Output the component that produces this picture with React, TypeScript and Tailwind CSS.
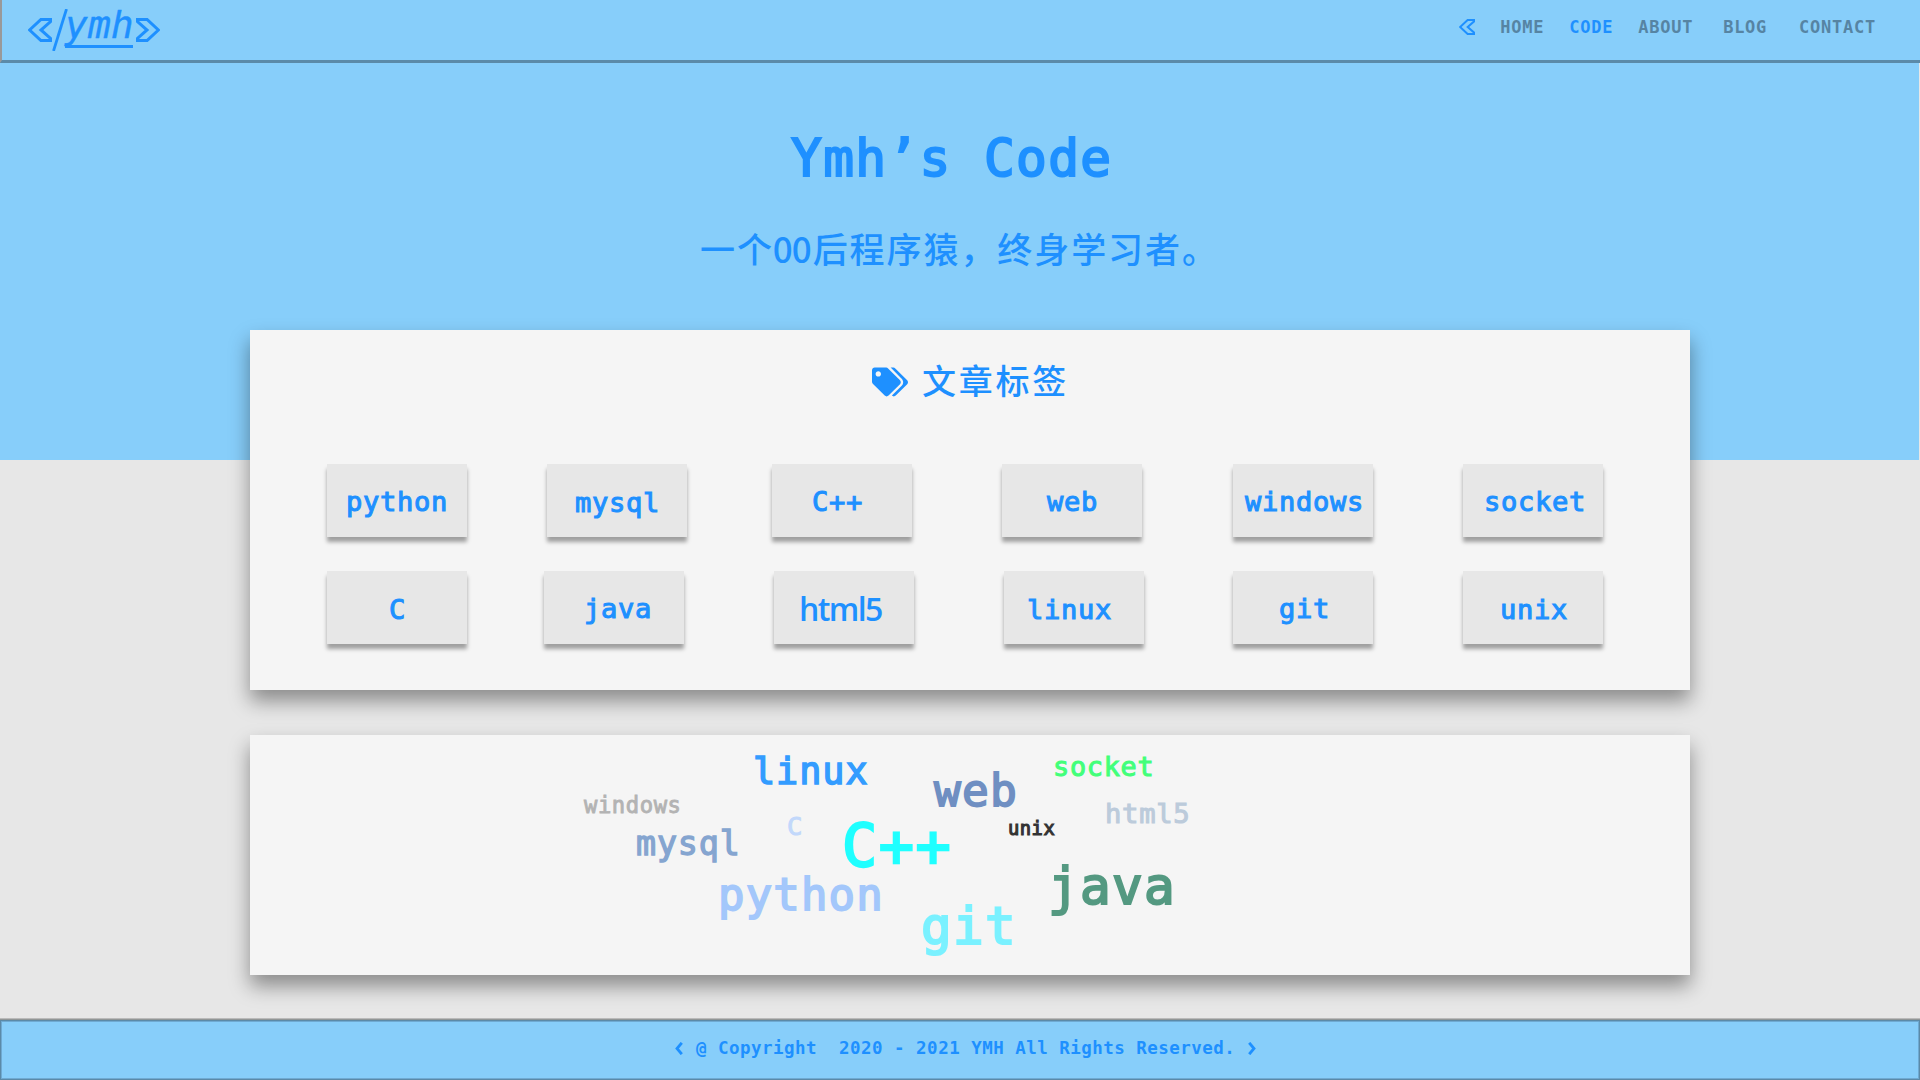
import { FaTags } from "react-icons/fa";

const MONO = "font-['DejaVu_Sans_Mono','Liberation_Mono',monospace]";
const CJK = "font-['Noto_Sans_CJK_SC',sans-serif]";
const SEMI = "tracking-[0.026em] [-webkit-text-stroke:0.04em_currentColor]";

function Chevrons({ className, weight }: { className: string; weight: number }) {
  return (
    <svg viewBox="0 0 24 24" className={className} fill="none" stroke="currentColor" strokeWidth={weight}>
      <path d="M22.8 1.4H13L1.6 12L13 22.6H22.8V20.6L13 12L22.8 3.4Z" />
    </svg>
  );
}

function Arrow({ className }: { className: string }) {
  return (
    <svg viewBox="0 0 8 13" className={className} fill="none" stroke="currentColor" strokeWidth="2.8">
      <path d="M6.8 0.8L2 6.5L6.8 12.2" />
    </svg>
  );
}

const nav = [
  { label: "HOME", cls: "ml-[25px] text-[#5684a3]" },
  { label: "CODE", cls: "ml-[25px] text-[#1e90ff]" },
  { label: "ABOUT", cls: "ml-[25px] text-[#5684a3]" },
  { label: "BLOG", cls: "ml-[30px] text-[#5684a3]" },
  { label: "CONTACT", cls: "ml-[32px] text-[#5684a3]" },
];

const rowOne = [
  { label: "python", cls: "ml-[77px] pl-[19px] pt-[24px]" },
  { label: "mysql", cls: "ml-[80px] pl-[28px] pt-[25px]" },
  { label: "C++", cls: "ml-[85px] pl-[40px] pt-[24px]" },
  { label: "web", cls: "ml-[90px] pl-[45px] pt-[24px]" },
  { label: "windows", cls: "ml-[91px] pl-[12px] pt-[24px]" },
  { label: "socket", cls: "ml-[90px] pl-[21px] pt-[24px]" },
];

const rowTwo = [
  { label: "C", cls: "ml-[77px] pl-[62px] pt-[25px]" },
  { label: "java", cls: "ml-[77px] pl-[40px] pt-[24px]" },
  { label: "html5", cls: "ml-[90px] pl-[25px] pt-[22px]" },
  { label: "linux", cls: "ml-[90px] pl-[23px] pt-[25px]" },
  { label: "git", cls: "ml-[89px] pl-[46px] pt-[24px]" },
  { label: "unix", cls: "ml-[90px] pl-[37px] pt-[25px]" },
];

const cloud = [
  { label: "linux", cls: "left-[503px] top-[19px] text-[36.8px] text-[#339cff]" },
  { label: "windows", cls: "left-[334px] top-[59px] text-[22.2px] text-[#b3b3b3]" },
  { label: "mysql", cls: "left-[386px] top-[92px] text-[33.3px] text-[#85a5d0]" },
  { label: "C", cls: "left-[537px] top-[79px] text-[25.5px] text-[#c2d8fb]" },
  { label: "C++", cls: "left-[592px] top-[82px] text-[58.5px] text-[#1fffff]" },
  { label: "python", cls: "left-[468px] top-[138px] text-[44px] text-[#a3c7fb]" },
  { label: "web", cls: "left-[684px] top-[34px] text-[44.5px] text-[#6f8fc2]" },
  { label: "socket", cls: "left-[803px] top-[19px] text-[26.9px] text-[#42ff7a]" },
  { label: "html5", cls: "left-[855px] top-[65px] text-[27.2px] text-[#bccbdb]" },
  { label: "unix", cls: "left-[758px] top-[85px] text-[18.8px] [-webkit-text-stroke:0.06em_currentColor] text-[#333333]" },
  { label: "java", cls: "left-[798px] top-[126px] text-[51px] text-[#549981]" },
  { label: "git", cls: "left-[671px] top-[166px] text-[51px] text-[#7af1ff]" },
];

function TagRow({ tags }: { tags: { label: string; cls: string }[] }) {
  return (
    <div className="flex">
      {tags.map((t) => (
        <div
          key={t.label}
          className={`h-[73px] w-[140px] shrink-0 whitespace-nowrap bg-[#e7e7e7] leading-none text-[#1e90ff] shadow-[0_5px_4px_rgba(0,0,0,0.35)] ${t.cls}`}
        >
          {t.label === "html5" ? (
            <span className="block font-['Open_Sans',sans-serif] text-[32px] font-semibold leading-none tracking-[-0.05em]">
              {t.label}
            </span>
          ) : (
            <span className={`block text-[27.1px] ${MONO} ${SEMI}`}>{t.label}</span>
          )}
        </div>
      ))}
    </div>
  );
}

export default function App() {
  return (
    <div className={`flex h-[1080px] w-[1920px] flex-col overflow-hidden bg-[#e7e7e7] ${MONO}`}>
      <header className="flex h-[63px] shrink-0 items-start border-b-[3px] border-l-2 border-b-[#5b8aa8] border-l-[#999999] bg-[#87cefa] text-[#1e90ff]">
        <div className="flex pl-[26px]">
          <Chevrons weight={3} className="mt-[18px] h-6 w-6" />
          <svg viewBox="0 0 16 42" className="mt-[9px] h-[42px] w-4" stroke="currentColor" strokeWidth="2.8">
            <path d="M1.5 42L14.5 0" />
          </svg>
          <span className="-ml-[3px] mt-[6px] h-[42px] w-[68px] border-b-[3px] border-current text-[38px] italic leading-none [-webkit-text-stroke:0.4px_currentColor]">
            ymh
          </span>
          <Chevrons weight={3} className="ml-[3px] mt-[18px] h-6 w-6 -scale-x-100" />
        </div>
        <nav className="ml-auto flex items-start pr-[44px]">
          <Chevrons weight={3} className="mt-[19px] h-4 w-4" />
          {nav.map((n) => (
            <a key={n.label} className={`mt-[19px] text-[17px] font-bold leading-none tracking-[0.75px] ${n.cls}`}>
              {n.label}
            </a>
          ))}
        </nav>
      </header>

      <section className="mr-px h-[397px] shrink-0 bg-[#87cefa] text-[#1e90ff]">
        <h1 className={`pl-[791px] pt-[70px] text-[51.2px] leading-none ${SEMI}`}>Ymh’s Code</h1>
        <p className={`pl-[700px] pt-[46px] text-[35px] font-medium leading-none tracking-[0.055em] ${CJK}`}>
          一个<span className="-ml-px mr-[2px] tracking-[-0.03em]">00</span>后程序猿，终身学习者。
        </p>
      </section>

      <main className="-mt-[130px] ml-[250px] w-[1440px]">
        <section className="h-[360px] bg-[#f5f5f5] shadow-[0_11px_19px_rgba(0,0,0,0.4)]">
          <div className="flex h-[134px] items-start pl-[622px] pt-[34px] text-[#1e90ff]">
            <FaTags className="mt-[3px] h-[30px] w-9" />
            <h2 className={`-mt-px ml-[14px] text-[34px] font-medium leading-none tracking-[0.08em] ${CJK}`}>文章标签</h2>
          </div>
          <div className="flex flex-col gap-[34px]">
            <TagRow tags={rowOne} />
            <TagRow tags={rowTwo} />
          </div>
        </section>
        <section className="relative mt-[45px] h-[240px] bg-[#f5f5f5] shadow-[0_11px_19px_rgba(0,0,0,0.4)]">
          {cloud.map((w) => (
            <span key={w.label} className={`absolute whitespace-nowrap leading-none ${SEMI} ${w.cls}`}>
              {w.label}
            </span>
          ))}
        </section>
      </main>

      <footer className="mt-[43px] h-[62px] shrink-0 border-t border-[#bababa]">
        <div className="h-[61px] border-t border-[#919696]">
          <div className="h-[60px] border border-[#5b8aa8] bg-[#87cefa]">
            <div className="flex h-[58px] items-start border border-[#6faad2] pl-[673px] pt-[18px] text-[#1e90ff]">
              <Arrow className="mt-[2px] h-[13px] w-2" />
              <span className="ml-[13px] whitespace-pre text-[17.5px] font-bold leading-none tracking-[0.47px]">
                @ Copyright  2020 - 2021 YMH All Rights Reserved.
              </span>
              <Arrow className="ml-[13px] mt-[2px] h-[13px] w-2 -scale-x-100" />
            </div>
          </div>
        </div>
      </footer>
    </div>
  );
}
